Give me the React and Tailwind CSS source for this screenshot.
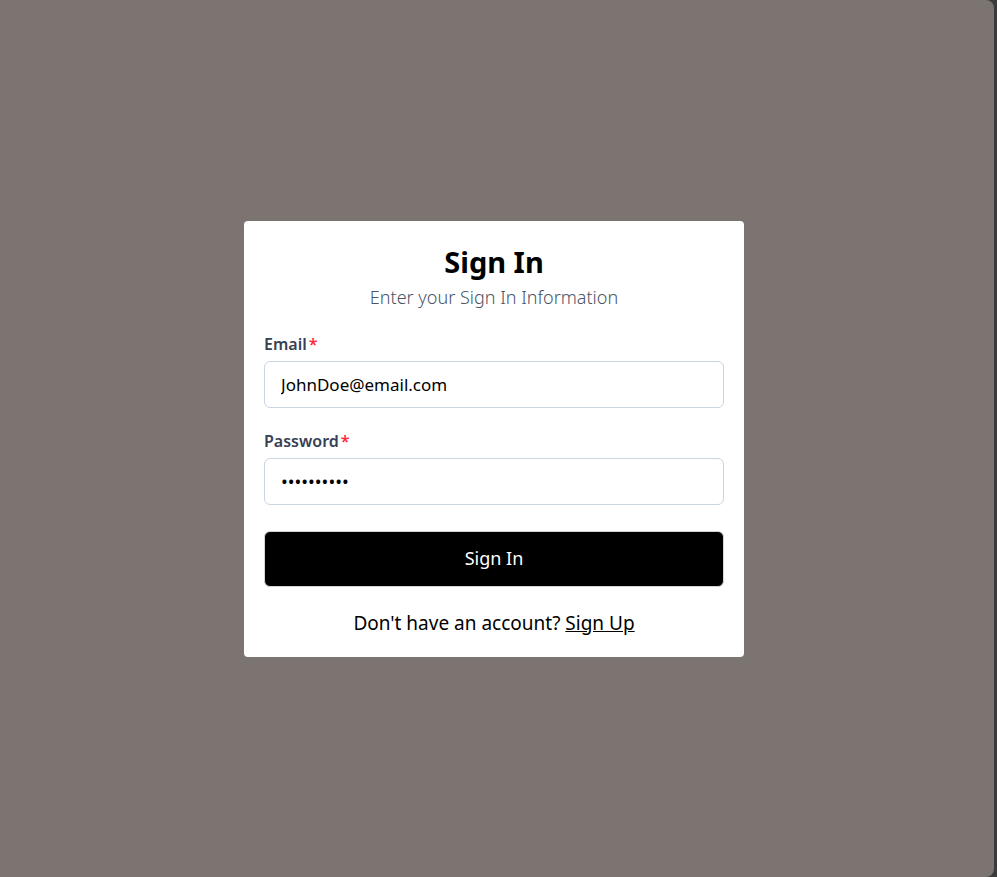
import React from 'react';

const SignIn = () => {
  return (
    <div className="w-[500px] bg-white rounded px-5 pt-[21px] pb-5 font-['Noto_Sans',sans-serif]">
      <h2 className="text-center text-[29px] leading-10 font-bold text-black">Sign In</h2>
      <p className="mt-px text-center text-[18px] leading-7 font-light text-gray-600">
        Enter your Sign In Information
      </p>

      <label className="mt-[21px] block text-[16px] leading-6 font-semibold text-gray-700">
        Email<span className="ml-[2px] text-red-500">*</span>
      </label>
      <input
        type="email"
        defaultValue="JohnDoe@email.com"
        className="mt-[5px] block w-full h-[47px] rounded-md border border-slate-300 px-4 text-[17px] text-black outline-none"
      />

      <label className="mt-[21px] block text-[16px] leading-6 font-semibold text-gray-700">
        Password<span className="ml-[2px] text-red-500">*</span>
      </label>
      <input
        type="password"
        defaultValue="1234567890"
        className="mt-[5px] block w-full h-[47px] rounded-md border border-slate-300 px-4 text-[18px] text-black outline-none"
      />

      <button className="mt-[26px] block w-full h-14 rounded-md bg-black border border-gray-300 text-white text-[18px]">
        Sign In
      </button>

      <p className="mt-[22px] text-center text-[19px] leading-7 text-black">
        Don't have an account? <a href="#" className="underline">Sign Up</a>
      </p>
    </div>
  );
};

export default function App() {
  return (
    <div className="w-[997px] h-[877px] bg-[#3b3b3b]">
      <div className="w-[994px] h-full bg-[#7b7470] rounded-r-lg flex items-center justify-center pr-[6px]">
        <SignIn />
      </div>
    </div>
  );
}
